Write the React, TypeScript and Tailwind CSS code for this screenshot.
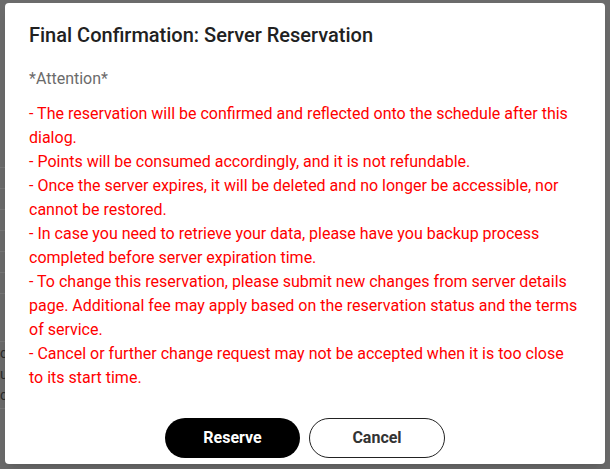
import React from 'react';

const notes = [
  '- The reservation will be confirmed and reflected onto the schedule after this dialog.',
  '- Points will be consumed accordingly, and it is not refundable.',
  '- Once the server expires, it will be deleted and no longer be accessible, nor cannot be restored.',
  '- In case you need to retrieve your data, please have you backup process completed before server expiration time.',
  '- To change this reservation, please submit new changes from server details page. Additional fee may apply based on the reservation status and the terms of service.',
  '- Cancel or further change request may not be accepted when it is too close to its start time.',
];

const App: React.FC = () => {
  return (
    <div
      className="flex h-[469px] w-[610px] overflow-hidden bg-[#6b6b6b] pt-[3px]"
      style={{ fontFamily: 'Roboto, "Liberation Sans", sans-serif' }}
    >
      {/* Page behind the overlay */}
      <div className="flex w-[5px] shrink-0 flex-col overflow-hidden text-[14px] leading-[21px] text-[#2a2a2a]">
        <div className="h-[164px]" />
        {[0, 1, 2, 3, 4, 5, 6].map((i) => (
          <div key={i} className="h-[21px] border-t border-[#777]" />
        ))}
        <div className="h-[27px]" />
        <div className="border-t border-[#777] pt-[1px]">c</div>
        <div>u</div>
        <div>c</div>
        <div className="mt-[2px] border-t border-[#777]" />
      </div>

      {/* Dialog */}
      <div className="flex h-[461px] w-[600px] shrink-0 flex-col rounded bg-white shadow-lg">
        <h2 className="px-6 py-4 text-[20px] font-medium leading-8 text-[#212121]">
          Final Confirmation: Server Reservation
        </h2>
        <div className="px-6 pb-5 text-[16px] leading-6">
          <p className="mb-[11px] text-[#6b6b6b]">*Attention*</p>
          {notes.map((n) => (
            <p key={n} className="text-[#ff0000]">
              {n}
            </p>
          ))}
        </div>
        <div className="flex justify-center gap-[9px] p-2">
          <button className="h-10 w-[135px] rounded-full bg-black text-[16px] font-bold text-white">
            Reserve
          </button>
          <button className="h-10 w-[136px] rounded-full border border-[#222] bg-white text-[16px] font-bold text-[#333]">
            Cancel
          </button>
        </div>
      </div>
    </div>
  );
};

export default App;
